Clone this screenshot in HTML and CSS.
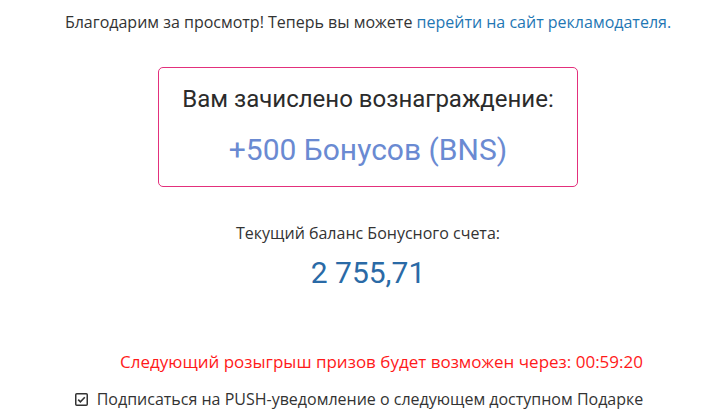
FILE: index.html
```html
<!DOCTYPE html>
<html lang="ru">
<head>
<meta charset="utf-8">
<link rel="stylesheet" href="styles.css">
</head>
<body>
<div class="page">
  <p class="thanks">Благодарим за просмотр! Теперь вы можете <a href="#" class="link">перейти на сайт рекламодателя.</a></p>
  <div class="reward">
    <div class="reward-title">Вам зачислено вознаграждение:</div>
    <div class="reward-amount">+500 Бонусов (BNS)</div>
  </div>
  <div class="balance-label">Текущий баланс Бонусного счета:</div>
  <div class="balance-value">2 755,71</div>
  <div class="next-draw">Следующий розыгрыш призов будет возможен через: 00:59:20</div>
  <label class="subscribe">
    <svg class="check" width="13" height="13" viewBox="0 0 13 13"><rect x="0.75" y="0.75" width="11.5" height="11.5" rx="1" fill="none" stroke="#333" stroke-width="1.5"/><path d="M3.2 6.6 L5.4 8.8 L9.8 4.3" fill="none" stroke="#333" stroke-width="1.6"/></svg>
    <span>Подписаться на PUSH-уведомление о следующем доступном Подарке</span>
  </label>
</div>
</body>
</html>
```
FILE: styles.css
```css
html, body {
  margin: 0;
  padding: 0;
  background: #fff;
}
.page {
  padding-left: 19px;
  display: flex;
  flex-direction: column;
  align-items: center;
  font-family: "Open Sans", "Liberation Sans", sans-serif;
  color: #333;
}
.thanks {
  margin: 10px 0 0;
  font-size: 16px;
  line-height: 24px;
  color: #333;
}
.link {
  color: #1f77b4;
  text-decoration: none;
}
.reward {
  margin-top: 33px;
  width: 418px;
  height: 118px;
  border: 1px solid #e3307c;
  border-radius: 5px;
  display: flex;
  flex-direction: column;
  align-items: center;
  font-family: Roboto, "Liberation Sans", sans-serif;
}
.reward-title {
  margin-top: 16px;
  font-size: 24px;
  line-height: 30px;
  color: #2b2b2b;
}
.reward-amount {
  margin-top: 18px;
  font-size: 30px;
  line-height: 36px;
  color: #6a8ad2;
}
.balance-label {
  margin-top: 34px;
  font-size: 16px;
  line-height: 24px;
}
.balance-value {
  margin-top: 10px;
  font-family: Roboto, "Liberation Sans", sans-serif;
  font-size: 30px;
  line-height: 36px;
  color: #2a6aa6;
}
.next-draw {
  margin-top: 58px;
  font-size: 17px;
  line-height: 26px;
  color: #ff1a1a;
  padding-left: 27px;
}
.subscribe {
  margin-top: 12px;
  display: flex;
  align-items: center;
  gap: 9px;
  font-size: 16px;
  line-height: 24px;
  color: #333;
  margin-left: -18px;
}
.check {
  flex: none;
}
```
